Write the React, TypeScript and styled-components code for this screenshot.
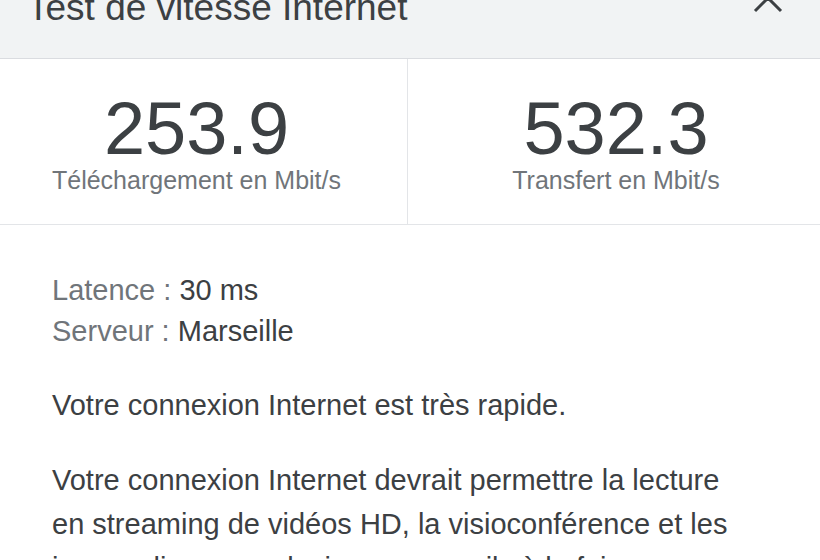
import React from "react";
import styled, { createGlobalStyle } from "styled-components";

const GlobalStyle = createGlobalStyle`
  html, body {
    margin: 0;
    padding: 0;
    background: #ffffff;
    overflow: hidden;
  }
  body {
    font-family: "Liberation Sans", Arial, sans-serif;
  }
`;

const Card = styled.div`
  width: 820px;
  height: 560px;
  background: #ffffff;
  overflow: hidden;
`;

const Header = styled.header`
  height: 58px;
  box-sizing: content-box;
  display: flex;
  align-items: flex-end;
  padding: 0 37px 0 27px;
  background: #f1f3f4;
  border-bottom: 1px solid #dadce0;
`;

const Title = styled.h1`
  margin: 0 0 32px 0;
  font-size: 37px;
  line-height: 37px;
  font-weight: 400;
  color: #3c4043;
  white-space: nowrap;
`;

const CloseButton = styled.button`
  margin: 0 0 45px auto;
  padding: 0;
  width: 30px;
  height: 30px;
  border: 0;
  background: none;
  color: #3c4043;
  cursor: pointer;
  display: flex;
`;

const Stats = styled.section`
  display: grid;
  grid-template-columns: 408px 1fr;
  border-bottom: 1px solid #e3e5e8;
`;

const Stat = styled.div<{ $first?: boolean }>`
  display: flex;
  flex-direction: column;
  align-items: center;
  padding: 33px ${(p) => (p.$first ? "14px" : "0")} 29px
    ${(p) => (p.$first ? "0" : "4px")};
  border-right: ${(p) => (p.$first ? "1px solid #e3e5e8" : "0")};
`;

const Value = styled.div`
  font-size: 74px;
  line-height: 74px;
  color: #3c4043;
`;

const Unit = styled.div`
  font-size: 25px;
  line-height: 29px;
  color: #70757a;
`;

const Body = styled.section`
  padding: 45px 52px 0;
  font-size: 29px;
  color: #3c4043;
`;

const Details = styled.div`
  line-height: 41px;
`;

const Label = styled.span`
  color: #70757a;
`;

const Paragraph = styled.p`
  margin: 31px 0 0;
  line-height: 44px;
  max-width: 700px;
`;

const stats = [
  { value: "253.9", unit: "Téléchargement en Mbit/s" },
  { value: "532.3", unit: "Transfert en Mbit/s" },
];

export default function App() {
  return (
    <>
      <GlobalStyle />
      <Card>
        <Header>
          <Title>Test de vitesse Internet</Title>
          <CloseButton aria-label="Fermer">
            <svg width="30" height="30" viewBox="0 0 30 30">
              <path
                d="M2 2 L28 28 M28 2 L2 28"
                stroke="currentColor"
                strokeWidth="3"
                fill="none"
              />
            </svg>
          </CloseButton>
        </Header>
        <Stats>
          {stats.map((s, i) => (
            <Stat key={s.unit} $first={i === 0}>
              <Value>{s.value}</Value>
              <Unit>{s.unit}</Unit>
            </Stat>
          ))}
        </Stats>
        <Body>
          <Details>
            <div>
              <Label>Latence : </Label>30 ms
            </div>
            <div>
              <Label>Serveur : </Label>Marseille
            </div>
          </Details>
          <Paragraph>Votre connexion Internet est très rapide.</Paragraph>
          <Paragraph>
            Votre connexion Internet devrait permettre la lecture en streaming
            de vidéos HD, la visioconférence et les jeux en ligne sur plusieurs
            appareils à la fois.
          </Paragraph>
        </Body>
      </Card>
    </>
  );
}
